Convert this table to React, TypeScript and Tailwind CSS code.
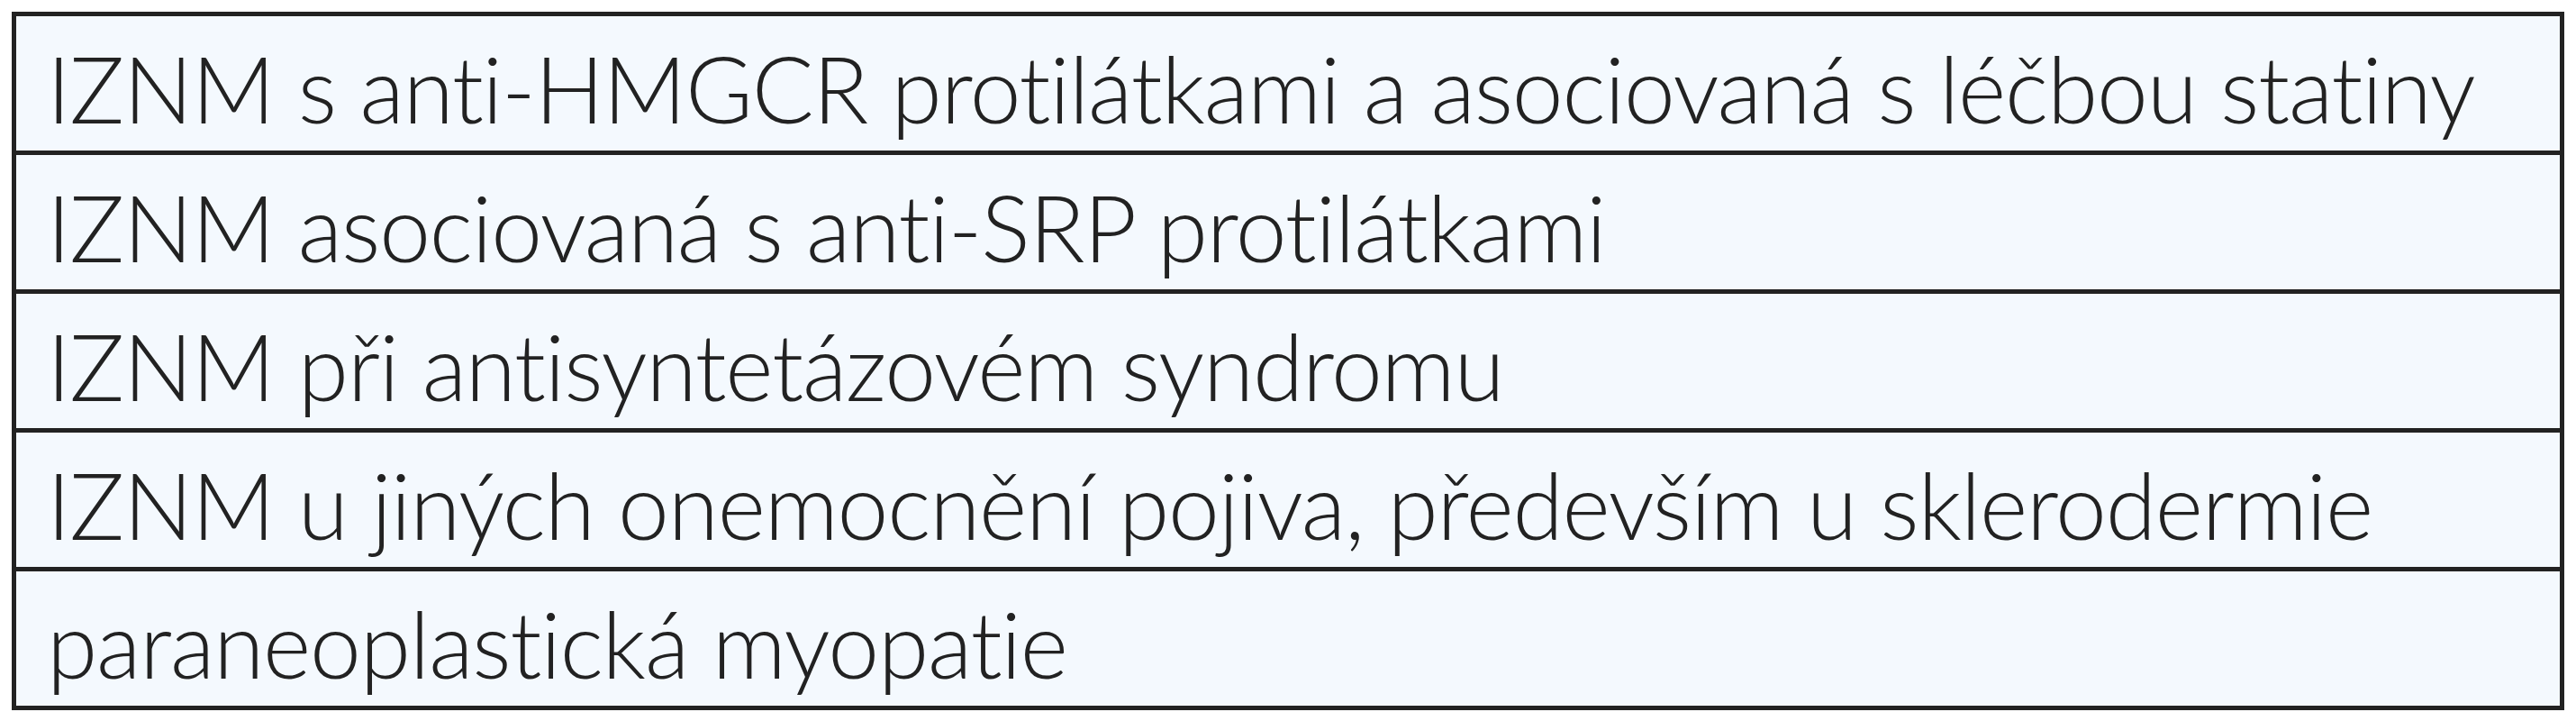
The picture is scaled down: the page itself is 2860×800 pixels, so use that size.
import React from "react";

const rows = [
  "IZNM s anti-HMGCR protilátkami a asociovaná s léčbou statiny",
  "IZNM asociovaná s anti-SRP protilátkami",
  "IZNM při antisyntetázovém syndromu",
  "IZNM u jiných onemocnění pojiva, především u sklerodermie",
  "paraneoplastická myopatie",
];

const App = () => {
  return (
    <div className="min-h-[800px] w-[2860px] bg-white pl-[13px] pt-[13px]">
      <div className="w-[2834px] border-[5px] border-[#222222] bg-[#f4f9fe]">
        {rows.map((row, i) => (
          <div
            key={i}
            className={`flex items-center whitespace-nowrap pl-[34px] pt-[10px] text-[102px] font-light leading-none tracking-[-1.2px] text-[#222222] [font-variant-ligatures:none] ${
              i > 0 ? "h-[154px] border-t-[5px] border-[#222222]" : "h-[149px]"
            }`}
            style={{ fontFamily: "Lato, 'Noto Sans', sans-serif" }}
          >
            {row}
          </div>
        ))}
      </div>
    </div>
  );
};

export default App;
